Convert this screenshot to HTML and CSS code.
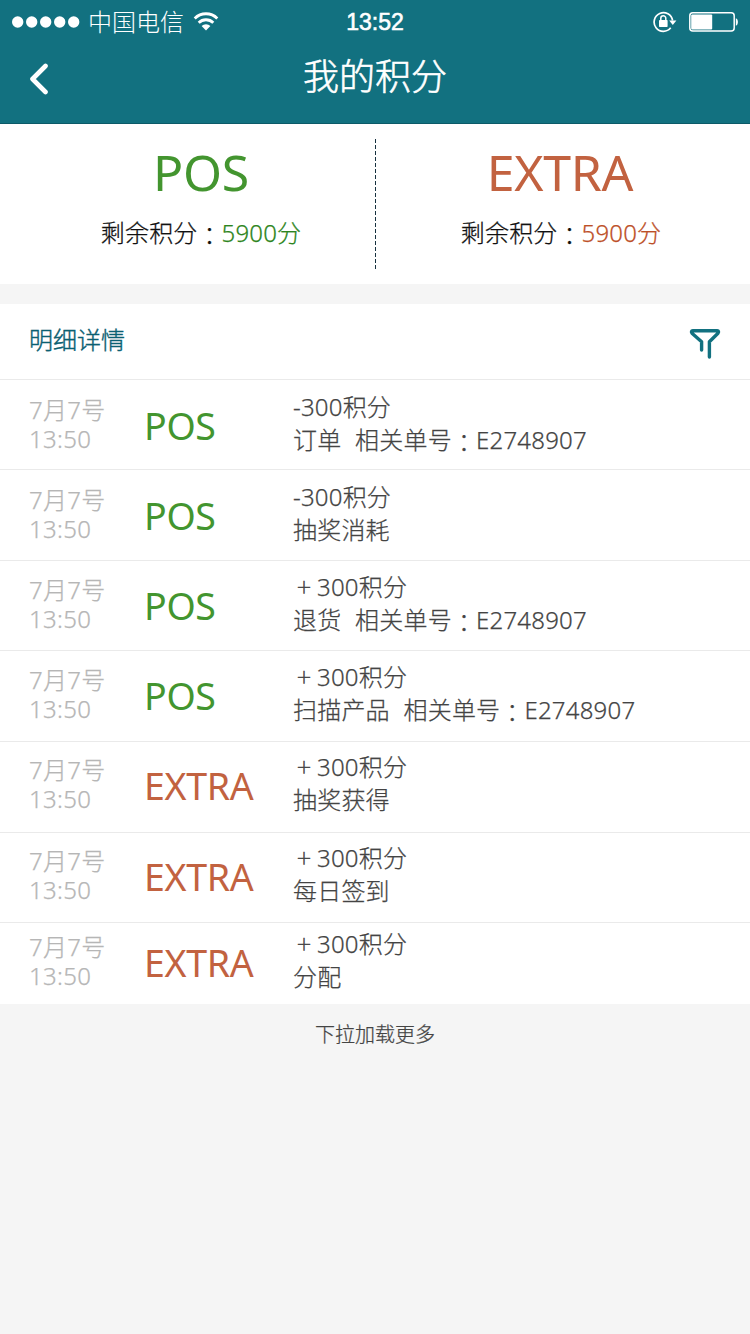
FILE: index.html
```html
<!DOCTYPE html>
<html lang="zh-CN">
<head>
<meta charset="utf-8">
<title>我的积分</title>
<link rel="stylesheet" href="styles.css">
</head>
<body>
<header class="header">
  <div class="status">
    <div class="status-left">
      <svg class="signal" width="68" height="12" viewBox="0 0 68 12" fill="#fff"><circle cx="5.7" cy="6" r="5.7"/><circle cx="19.7" cy="6" r="5.7"/><circle cx="33.7" cy="6" r="5.7"/><circle cx="47.7" cy="6" r="5.7"/><circle cx="61.7" cy="6" r="5.7"/></svg>
      <span class="carrier">中国电信</span>
      <svg class="wifi" width="26" height="20" viewBox="0 0 26 20"><g fill="none" stroke="#fff" stroke-width="2.8"><path d="M1.7 6.4A16 16 0 0 1 24.3 6.4"/><path d="M5.7 10.8A10.3 10.3 0 0 1 20.3 10.8"/></g><path d="M13 18.5L8.6 14.1A6.2 6.2 0 0 1 17.4 14.1Z" fill="#fff"/></svg>
    </div>
    <time class="clock">13:52</time>
    <div class="status-right">
      <svg width="24" height="22" viewBox="0 0 24 22"><path d="M17.7 16.8A9.3 9.3 0 1 1 19.6 9.5" fill="none" stroke="#fff" stroke-width="1.7"/><path d="M16.2 9.5H23.4L19.8 14Z" fill="#fff"/><rect x="6" y="9" width="8.6" height="7" rx=".7" fill="#fff"/><path d="M7.8 9.5V7.2a2.5 2.5 0 0 1 5 0V9.5" fill="none" stroke="#fff" stroke-width="1.5"/></svg>
      <svg width="50" height="20" viewBox="0 0 50 20"><rect x=".8" y=".8" width="44.4" height="18.2" rx="3" fill="none" stroke="#fff" stroke-width="1.5"/><rect x="2.2" y="2.4" width="21" height="15" rx="1" fill="#fff"/><path d="M46.8 6.2c2.8.6 2.8 7 0 7.6Z" fill="#fff"/></svg>
    </div>
  </div>
  <nav class="nav">
    <svg class="back" width="20" height="32" viewBox="0 0 20 32"><path d="M16.5 3L3.5 16L16.5 29" fill="none" stroke="#fff" stroke-width="4.6" stroke-linecap="round" stroke-linejoin="round"/></svg>
    <h1 class="title">我的积分</h1>
  </nav>
</header>

<section class="summary">
  <div class="account pos">
    <div class="account-name">POS</div>
    <div class="balance">剩余积分<span class="mid" lang="zh-TW">：</span><span class="points">5900分</span></div>
  </div>
  <svg class="divider" width="2" height="130" viewBox="0 0 2 130"><path d="M.5 0V130" stroke="#17313f" stroke-width="1" stroke-dasharray="4 2"/></svg>
  <div class="account extra">
    <div class="account-name">EXTRA</div>
    <div class="balance">剩余积分<span class="mid" lang="zh-TW">：</span><span class="points">5900分</span></div>
  </div>
</section>

<section class="details">
  <div class="details-head">
    <h2 class="details-title">明细详情</h2>
    <svg class="filter" width="32" height="32" viewBox="0 0 32 32"><path d="M12.6 22V13.8L3 5.2Q1.6 2.9 3.8 2.8H28.2Q30.4 2.9 29 5.2L20.4 13.8V29" fill="none" stroke="#127180" stroke-width="3.4" stroke-linecap="round" stroke-linejoin="round"/></svg>
  </div>
  <ul class="list">
    <li class="row pos"><div class="date">7月7号<br>13:50</div><div class="kind">POS</div><div class="info">-300积分<br>订单  相关单号<span class="mid" lang="zh-TW">：</span>E2748907</div></li>
    <li class="row pos"><div class="date">7月7号<br>13:50</div><div class="kind">POS</div><div class="info">-300积分<br>抽奖消耗</div></li>
    <li class="row pos"><div class="date">7月7号<br>13:50</div><div class="kind">POS</div><div class="info"><span class="plus">＋</span>300积分<br>退货  相关单号<span class="mid" lang="zh-TW">：</span>E2748907</div></li>
    <li class="row pos"><div class="date">7月7号<br>13:50</div><div class="kind">POS</div><div class="info"><span class="plus">＋</span>300积分<br>扫描产品  相关单号<span class="mid" lang="zh-TW">：</span>E2748907</div></li>
    <li class="row extra"><div class="date">7月7号<br>13:50</div><div class="kind">EXTRA</div><div class="info"><span class="plus">＋</span>300积分<br>抽奖获得</div></li>
    <li class="row extra"><div class="date">7月7号<br>13:50</div><div class="kind">EXTRA</div><div class="info"><span class="plus">＋</span>300积分<br>每日签到</div></li>
    <li class="row extra"><div class="date">7月7号<br>13:50</div><div class="kind">EXTRA</div><div class="info"><span class="plus">＋</span>300积分<br>分配</div></li>
  </ul>
</section>
<footer class="more">下拉加载更多</footer>
</body>
</html>
```
FILE: styles.css
```css
* { box-sizing: border-box; }
body {
  margin: 0;
  width: 750px;
  min-height: 1334px;
  background: #f5f5f5;
  font-family: "Noto Sans", "Noto Sans CJK SC", sans-serif;
  font-weight: 300;
  font-size: 24px;
  color: #444;
  -webkit-text-stroke: .25px currentColor;
}
h1, h2, ul { margin: 0; padding: 0; font-weight: 300; list-style: none; }
svg { display: block; flex: none; }
.mid { font-family: "Noto Sans CJK TC", sans-serif; line-height: 1; vertical-align: -3px; }
.plus {
  display: inline-block;
  width: 24px;
  padding-right: 2px;
  font-size: 16px;
  line-height: 16px;
  vertical-align: 3px;
  text-align: center;
  -webkit-text-stroke: .5px currentColor;
}

.header { height: 124px; background: #127180; border-bottom: 1px solid #0c5a68; color: #fff; }
.status { display: grid; grid-template-columns: 1fr 80px 1fr; height: 43px; align-items: center; }
.status-left { display: flex; align-items: center; padding-left: 12px; }
.carrier { margin-left: 8px; line-height: 34px; -webkit-text-stroke: 0; }
.wifi { margin-left: 9px; }
.clock {
  font: 400 23px/34px "Liberation Sans", sans-serif;
  -webkit-text-stroke: .6px #fff;
  text-align: center;
}
.status-right { display: flex; align-items: center; justify-content: flex-end; gap: 12px; padding-right: 11px; }
.nav { display: grid; grid-template-columns: 100px 1fr 100px; height: 72px; align-items: center; }
.back { margin-left: 29px; }
.title {
  font-size: 36px;
  line-height: 54px;
  text-align: center;
  padding-bottom: 4px;
  -webkit-text-stroke: .6px currentColor;
}

.summary { display: grid; grid-template-columns: 375px 2px 1fr; height: 160px; background: #fff; align-items: start; }
.divider { margin-top: 15px; }
.account { text-align: center; padding-top: 18px; }
.account.pos { padding-left: 27px; }
.account.extra { padding-right: 5px; }
.account-name { font-size: 50px; line-height: 60px; font-weight: 400; letter-spacing: -.3px; -webkit-text-stroke: 0; }
.balance { margin-top: 14px; line-height: 34px; letter-spacing: .15px; color: #111; }
.pos .account-name, .pos .kind { color: #43952f; }
.extra .account-name, .extra .kind { color: #c26240; }
.extra .account-name { padding-right: 2px; }
.pos .points { color: #2d8520; }
.extra .points { color: #bd5028; }

.details { margin-top: 20px; background: #fff; }
.details-head {
  display: flex;
  justify-content: space-between;
  height: 76px;
  padding: 19px 29px 0 29px;
  border-bottom: 1px solid #eaeaea;
}
.details-title { font-size: 24px; line-height: 34px; color: #0b6072; -webkit-text-stroke: .4px currentColor; }
.filter { margin-top: 5px; }

.row {
  display: grid;
  grid-template-columns: 115px 149px 1fr;
  align-items: start;
  height: 91px;
  padding: 10px 0 0 29px;
  border-bottom: 1px solid #eaeaea;
}
.row:nth-child(1) { height: 90px; padding-top: 11px; }
.row:nth-child(2) { padding-top: 11px; }
.row:nth-child(3) { height: 90px; }
.row:nth-child(5), .row:nth-child(6) { padding-top: 9px; }
.row:nth-child(6) { height: 90px; }
.row:nth-child(7) { height: 81px; padding-top: 5px; border-bottom: 0; }
.date { padding-top: 4px; line-height: 29px; letter-spacing: .3px; color: #b6b6b6; }
.kind { padding-top: 10px; font-size: 37.5px; line-height: 50px; font-weight: 400; letter-spacing: -.3px; -webkit-text-stroke: 0; }
.info { line-height: 32.5px; letter-spacing: .2px; white-space: pre; word-spacing: .4px; }

.more { padding-top: 16px; font-size: 20px; line-height: 30px; text-align: center; }
```
